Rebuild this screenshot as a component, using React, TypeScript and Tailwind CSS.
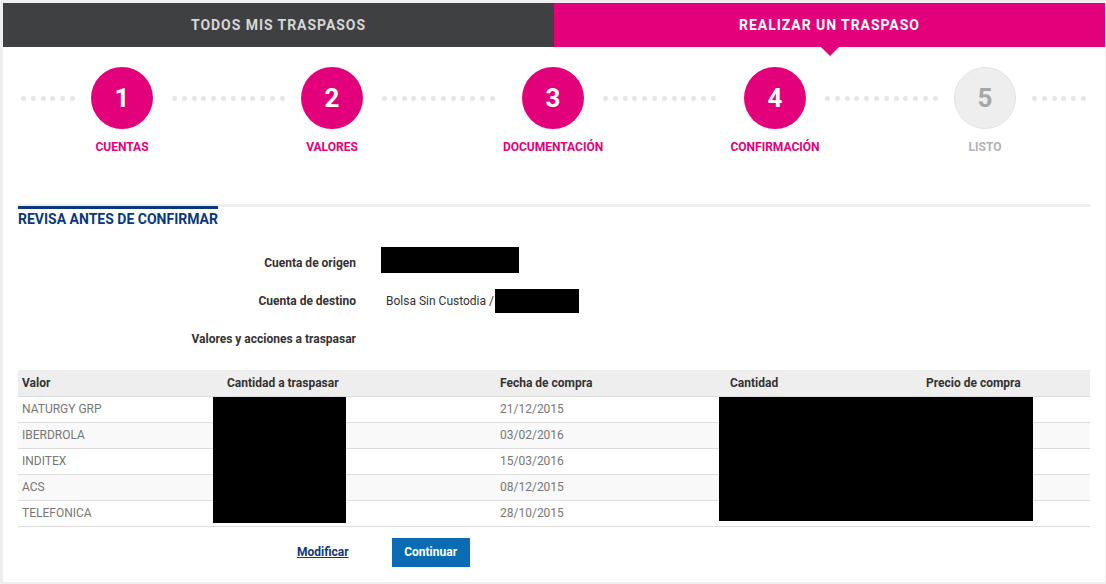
// Traspasos — paso 4: revisar antes de confirmar.

const STEPS = [
  { n: 1, label: 'CUENTAS', done: true },
  { n: 2, label: 'VALORES', done: true },
  { n: 3, label: 'DOCUMENTACIÓN', done: true },
  { n: 4, label: 'CONFIRMACIÓN', done: true },
  { n: 5, label: 'LISTO', done: false },
];

// ancho de cada tramo de puntos (antes de cada paso)
const GAPS = [73, 148, 159, 160, 148];

const ROWS = [
  { valor: 'NATURGY GRP', fecha: '21/12/2015' },
  { valor: 'IBERDROLA', fecha: '03/02/2016' },
  { valor: 'INDITEX', fecha: '15/03/2016' },
  { valor: 'ACS', fecha: '08/12/2015' },
  { valor: 'TELEFONICA', fecha: '28/10/2015' },
];

function Dots({ count }: { count: number }) {
  return (
    <div className="flex items-center gap-[4.8px]">
      {Array.from({ length: count }).map((_, i) => (
        <span key={i} className="w-[5px] h-[5px] rounded-full bg-[#e6e6e6]" />
      ))}
    </div>
  );
}

export default function App() {
  return (
    <div
      className="h-[584px] bg-[#efefef] pt-[3px] pl-[3px] pr-px pb-[2px] overflow-hidden"
      style={{ fontFamily: 'Roboto, "Liberation Sans", sans-serif' }}
    >
      <div className="h-full bg-white flex flex-col">
        {/* pestañas */}
        <div className="flex h-[44px] shrink-0">
          <div className="w-[551px] bg-[#3f4042] flex items-center justify-center text-[14px] font-bold tracking-[0.95px] text-[#d6d6d6]">
            TODOS MIS TRASPASOS
          </div>
          <div className="relative flex-1 bg-[#e3007b] flex items-center justify-center text-[14px] font-bold tracking-[0.95px] text-white">
            REALIZAR UN TRASPASO
            <span className="absolute left-1/2 -translate-x-1/2 top-full w-0 h-0 border-l-[9px] border-r-[9px] border-t-[9px] border-l-transparent border-r-transparent border-t-[#e3007b]" />
          </div>
        </div>

        <div className="px-[15px]">
          {/* pasos */}
          <div className="flex items-start pt-[20px]">
            {STEPS.map((s, i) => (
              <div key={s.n} className="flex items-start">
                <div
                  className={
                    i === 0
                      ? 'flex items-center justify-end pr-[16px] h-[62px]'
                      : 'flex items-center pl-[19px] h-[62px]'
                  }
                  style={{ width: GAPS[i] }}
                >
                  <Dots count={i === 0 ? 6 : 12} />
                </div>
                <div className="w-[62px] flex flex-col items-center">
                  <div
                    className={
                      s.done
                        ? 'w-[62px] h-[62px] rounded-full bg-[#e3007b] flex items-center justify-center text-white text-[26px] font-bold'
                        : 'w-[62px] h-[62px] rounded-full bg-[#eeeeee] border border-[#e3e3e3] flex items-center justify-center text-[#a6a6a6] text-[26px] font-bold'
                    }
                  >
                    {s.n}
                  </div>
                  <div
                    className={
                      s.done
                        ? 'mt-[11px] text-[12px] leading-[14px] font-bold whitespace-nowrap text-[#e3007b]'
                        : 'mt-[11px] text-[12px] leading-[14px] font-bold whitespace-nowrap text-[#b3b3b3]'
                    }
                  >
                    {s.label}
                  </div>
                </div>
              </div>
            ))}
            <div className="flex-1 flex items-center pl-[16px] h-[62px]">
              <Dots count={6} />
            </div>
          </div>

          {/* revisa antes de confirmar */}
          <div className="mt-[50px] border-t-[3px] border-[#eeeeee]">
            <div className="-mt-[3px] inline-block border-t-[3px] border-[#0a3880] pt-[2px] text-[14px] leading-[16px] font-bold text-[#0a3880]">
              REVISA ANTES DE CONFIRMAR
            </div>
          </div>

          <div className="mt-[13px] text-[12px]">
            <div className="flex items-center h-[38px]">
              <div className="w-[338px] text-right font-bold text-[#333]">Cuenta de origen</div>
              <div className="ml-[25px] flex items-center mb-[6px]">
                <span className="inline-block w-[138px] h-[26px] bg-black" />
              </div>
            </div>
            <div className="flex items-center h-[38px]">
              <div className="w-[338px] text-right font-bold text-[#333]">Cuenta de destino</div>
              <div className="ml-[30px] flex items-center text-[#333]">
                Bolsa Sin Custodia /
                <span className="inline-block w-[84px] h-[24px] bg-black ml-px" />
              </div>
            </div>
            <div className="flex items-center h-[38px]">
              <div className="w-[338px] text-right font-bold text-[#333]">Valores y acciones a traspasar</div>
            </div>
          </div>

          {/* tabla de valores */}
          <div className="relative mt-[12px]">
            <table className="w-full border-collapse text-[12px] table-fixed">
              <colgroup>
                <col className="w-[205px]" />
                <col className="w-[273px]" />
                <col className="w-[230px]" />
                <col className="w-[196px]" />
                <col />
              </colgroup>
              <thead>
                <tr className="bg-[#eeeeee] h-[26px] text-left text-[#333] font-bold border-b border-[#dcdcdc]">
                  <th className="pl-[4px] font-bold">Valor</th>
                  <th className="pl-[4px] font-bold">Cantidad a traspasar</th>
                  <th className="pl-[4px] font-bold">Fecha de compra</th>
                  <th className="pl-[4px] font-bold">Cantidad</th>
                  <th className="pl-[4px] font-bold">Precio de compra</th>
                </tr>
              </thead>
              <tbody>
                {ROWS.map((r, i) => (
                  <tr
                    key={r.valor}
                    className={
                      i % 2 === 1
                        ? 'h-[26px] bg-[#f9f9f9] border-b border-[#dcdcdc] text-[#777]'
                        : 'h-[26px] bg-white border-b border-[#dcdcdc] text-[#777]'
                    }
                  >
                    <td className="pl-[4px]">{r.valor}</td>
                    <td className="pl-[4px]"></td>
                    <td className="pl-[4px]">{r.fecha}</td>
                    <td className="pl-[4px]"></td>
                    <td className="pl-[4px]"></td>
                  </tr>
                ))}
              </tbody>
            </table>
            <span className="absolute left-[195px] top-[27px] w-[133px] h-[126px] bg-black" />
            <span className="absolute left-[701px] top-[27px] w-[314px] h-[124px] bg-black" />
          </div>

          {/* acciones */}
          <div className="mt-[11px] flex items-center pl-[279px] text-[12px] font-bold">
            <a href="#" className="underline text-[#0a3880]">Modificar</a>
            <button className="ml-[43px] w-[78px] h-[29px] bg-[#0b6bb3] text-white font-bold">
              Continuar
            </button>
          </div>
        </div>
      </div>
    </div>
  );
}
